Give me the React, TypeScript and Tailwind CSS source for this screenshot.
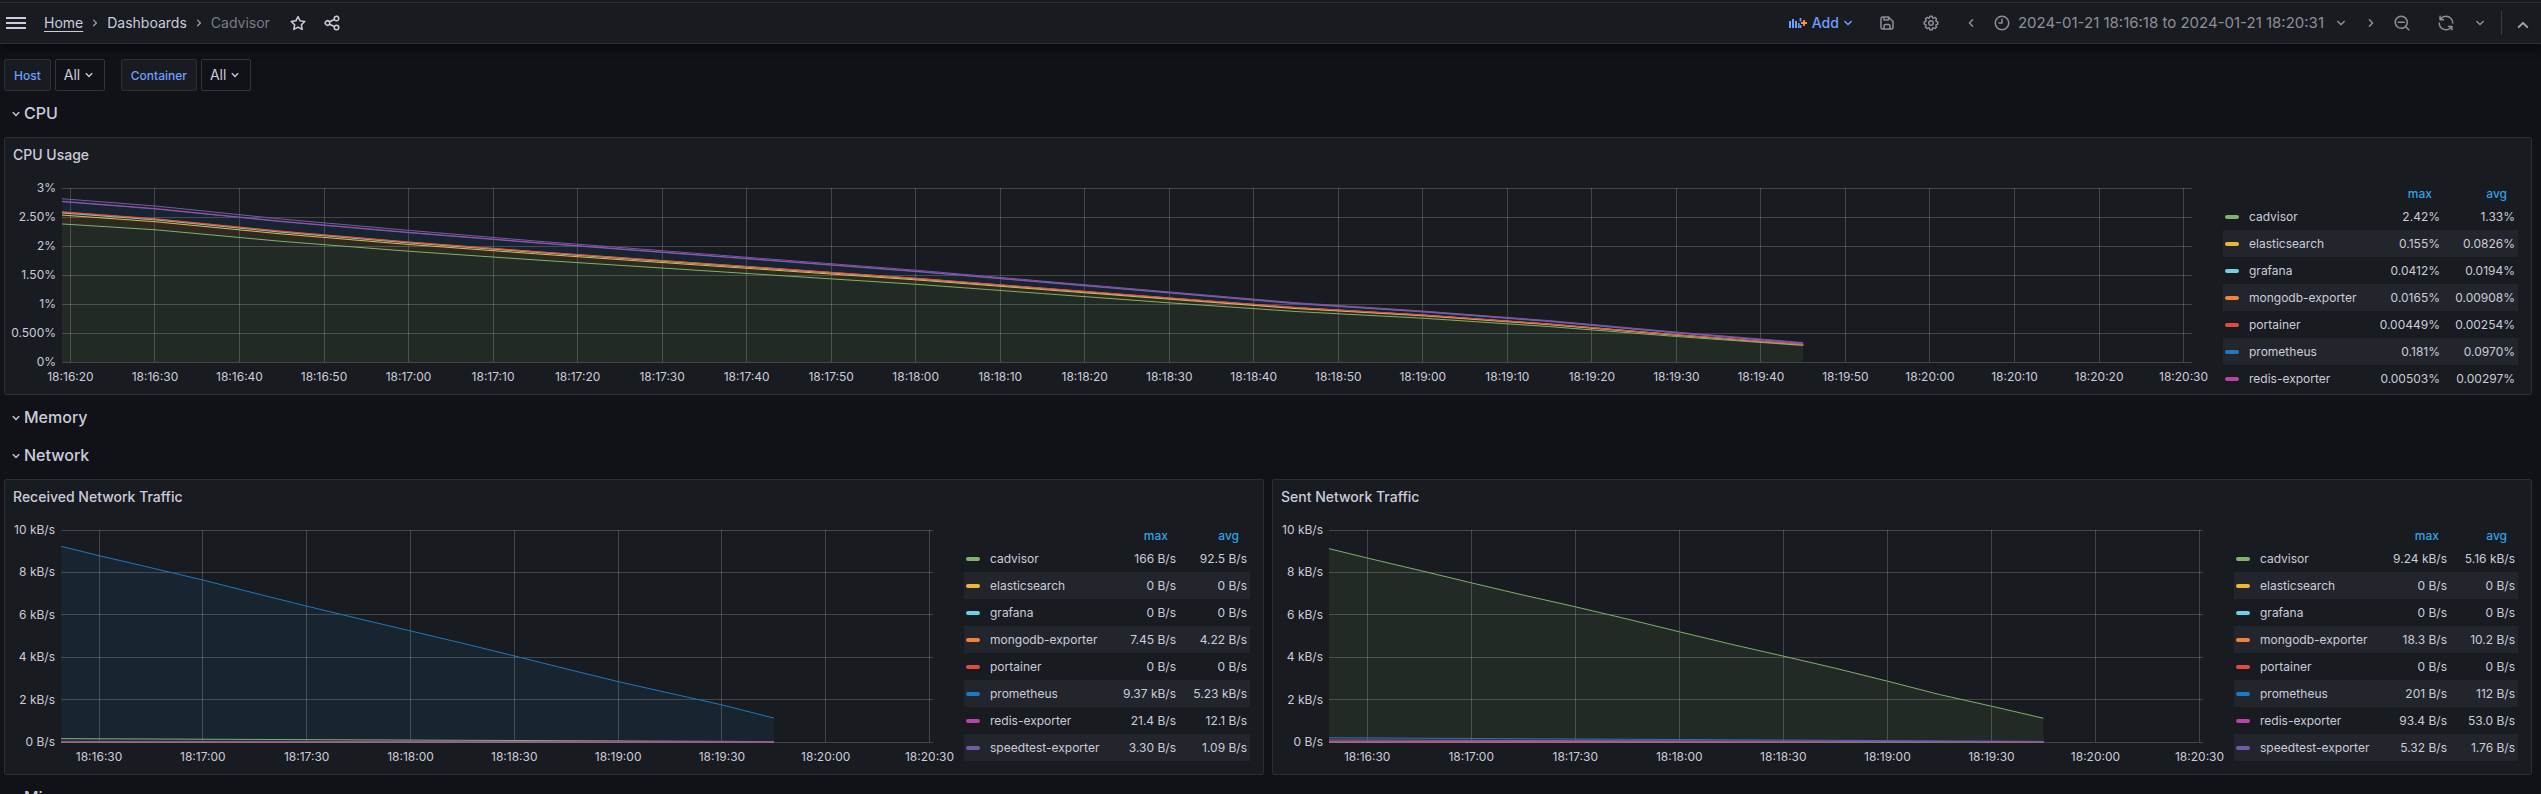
import type { ReactNode } from "react";

const PATHS = {
  angleDown:
    "M17,9.17a1,1,0,0,0-1.41,0L12,12.71,8.46,9.17a1,1,0,0,0-1.41,0,1,1,0,0,0,0,1.42l4.24,4.24a1,1,0,0,0,1.42,0L17,10.59A1,1,0,0,0,17,9.17Z",
  star: "M22,9.67A1,1,0,0,0,21.14,9l-5.69-.83L12.9,3a1,1,0,0,0-1.8,0L8.55,8.16,2.86,9a1,1,0,0,0-.81.68,1,1,0,0,0,.25,1l4.13,4-1,5.68A1,1,0,0,0,6.9,21.44L12,18.77l5.1,2.67a.93.93,0,0,0,.46.12,1,1,0,0,0,.59-.19,1,1,0,0,0,.4-1l-1-5.68,4.13-4A1,1,0,0,0,22,9.67Zm-6.15,4a1,1,0,0,0-.29.88l.72,4.2-3.76-2a1.06,1.06,0,0,0-.94,0l-3.76,2,.72-4.2a1,1,0,0,0-.29-.88l-3-3,4.21-.61a1,1,0,0,0,.76-.55L12,5.7l1.88,3.82a1,1,0,0,0,.76.55l4.21.61Z",
  share:
    "M18,14a4,4,0,0,0-3.08,1.48l-5.1-2.35a3.64,3.64,0,0,0,0-2.26l5.1-2.35A4,4,0,1,0,14,6a4.17,4.17,0,0,0,.07.71L8.79,9.14a4,4,0,1,0,0,5.72l5.28,2.43A4.17,4.17,0,0,0,14,18a4,4,0,1,0,4-4ZM18,4a2,2,0,1,1-2,2A2,2,0,0,1,18,4ZM6,14a2,2,0,1,1,2-2A2,2,0,0,1,6,14Zm12,6a2,2,0,1,1,2-2A2,2,0,0,1,18,20Z",
  save: "M20.71,9.29l-6-6a1,1,0,0,0-.32-.21A1.09,1.09,0,0,0,14,3H6A3,3,0,0,0,3,6V18a3,3,0,0,0,3,3H18a3,3,0,0,0,3-3V10A1,1,0,0,0,20.71,9.29ZM9,5h4V7H9Zm6,14H9V16a1,1,0,0,1,1-1h4a1,1,0,0,1,1,1Zm4-1a1,1,0,0,1-1,1H17V16a3,3,0,0,0-3-3H10a3,3,0,0,0-3,3v3H6a1,1,0,0,1-1-1V6A1,1,0,0,1,6,5H7V8A1,1,0,0,0,8,9h6a1,1,0,0,0,1-1V6.41l4,4Z",
  cog: "M21.32,9.55l-1.89-.63.89-1.78A1,1,0,0,0,20.13,6L18,3.87a1,1,0,0,0-1.15-.19l-1.78.89-.63-1.89A1,1,0,0,0,13.5,2h-3a1,1,0,0,0-.95.68L8.92,4.57,7.14,3.68A1,1,0,0,0,6,3.87L3.87,6a1,1,0,0,0-.19,1.15l.89,1.78-1.89.63A1,1,0,0,0,2,10.5v3a1,1,0,0,0,.68.95l1.89.63-.89,1.78A1,1,0,0,0,3.87,18L6,20.13a1,1,0,0,0,1.15.19l1.78-.89.63,1.89a1,1,0,0,0,.95.68h3a1,1,0,0,0,.95-.68l.63-1.89,1.78.89A1,1,0,0,0,18,20.13L20.13,18a1,1,0,0,0,.19-1.15l-.89-1.78,1.89-.63A1,1,0,0,0,22,13.5v-3A1,1,0,0,0,21.32,9.55ZM20,12.78l-1.2.4A2,2,0,0,0,17.64,16l.57,1.14-1.1,1.1L16,17.64a2,2,0,0,0-2.79,1.16l-.4,1.2H11.22l-.4-1.2A2,2,0,0,0,8,17.64l-1.14.57-1.1-1.1L6.36,16A2,2,0,0,0,5.2,13.18L4,12.78V11.22l1.2-.4A2,2,0,0,0,6.36,8L5.79,6.89l1.1-1.1L8,6.36A2,2,0,0,0,10.82,5.2l.4-1.2h1.56l.4,1.2A2,2,0,0,0,16,6.36l1.14-.57,1.1,1.1L17.64,8a2,2,0,0,0,1.16,2.79l1.2.4ZM12,8a4,4,0,1,0,4,4A4,4,0,0,0,12,8Zm0,6a2,2,0,1,1,2-2A2,2,0,0,1,12,14Z",
  clock:
    "M12,2A10,10,0,1,0,22,12,10,10,0,0,0,12,2Zm0,18a8,8,0,1,1,8-8A8,8,0,0,1,12,20ZM12,6a1,1,0,0,0-1,1v4H8a1,1,0,0,0,0,2h4a1,1,0,0,0,1-1V7A1,1,0,0,0,12,6Z",
  zoomOut:
    "M21.71,20.29,18,16.61A9,9,0,1,0,16.61,18l3.68,3.68a1,1,0,0,0,1.42,0A1,1,0,0,0,21.71,20.29ZM11,18a7,7,0,1,1,7-7A7,7,0,0,1,11,18Zm4-8H7a1,1,0,0,0,0,2h8a1,1,0,0,0,0-2Z",
  sync: "M19.91,15.51H15.38a1,1,0,0,0,0,2h2.4A8,8,0,0,1,4,12a1,1,0,0,0-2,0,10,10,0,0,0,16.88,7.23V21a1,1,0,0,0,2,0V16.5A1,1,0,0,0,19.91,15.51ZM12,2A10,10,0,0,0,5.12,4.77V3a1,1,0,0,0-2,0V7.5a1,1,0,0,0,1,1h4.5a1,1,0,0,0,0-2H6.22A8,8,0,0,1,20,12a1,1,0,0,0,2,0A10,10,0,0,0,12,2Z",
};

function Icon({ name, className = "size-[18px]" }: { name: keyof typeof PATHS; className?: string }) {
  return (
    <svg viewBox="0 0 24 24" fill="currentColor" aria-hidden="true" className={`shrink-0 ${className}`}>
      <path d={PATHS[name]} />
    </svg>
  );
}

function AddPanelIcon() {
  return (
    <svg viewBox="0 0 18 12" aria-hidden="true" className="h-3 w-[18px] shrink-0">
      <g fill="#6e9fff">
        <rect x="0" y="4" width="2" height="7" />
        <rect x="3" y="2" width="2" height="9" />
        <rect x="6" y="4" width="2" height="7" />
        <rect x="9" y="6" width="1.6" height="5" />
        <rect x="10.6" y="1" width="1.8" height="3.4" />
        <rect x="10.6" y="8" width="1.8" height="3" />
      </g>
      <path d="M12 6h6M15 3v6" stroke="#ff9830" strokeWidth="1.8" />
    </svg>
  );
}

function IconButton({ label, className, children }: { label: string; className: string; children: ReactNode }) {
  return (
    <button type="button" aria-label={label} className={`flex h-8 items-center justify-center ${className}`}>
      {children}
    </button>
  );
}

function TopBar() {
  return (
    <header className="relative z-10 bg-[#181b1f] pt-[2px] shadow-[0_4px_8px_rgba(0,0,0,0.6)]">
      <div className="flex h-[42px] items-center justify-between border-y border-[#2d2f36] pl-[6px] text-sm">
        <nav aria-label="Breadcrumb" className="flex items-center">
          <button type="button" aria-label="Menu" className="mr-[18px] flex w-5 flex-col gap-[3px]">
            <span className="h-[2px] bg-[#ccccdc]" />
            <span className="h-[2px] bg-[#ccccdc]" />
            <span className="h-[2px] bg-[#ccccdc]" />
          </button>
          <a href="#home" className="underline underline-offset-[3px]">
            Home
          </a>
          <Icon name="angleDown" className="mx-1 size-4 -rotate-90 text-[#9a9ba6]" />
          <a href="#dashboards">Dashboards</a>
          <Icon name="angleDown" className="mx-1 size-4 -rotate-90 text-[#9a9ba6]" />
          <span className="text-[#7b7c87]">Cadvisor</span>
          <IconButton label="Mark as favorite" className="ml-[19px] w-[18px]">
            <Icon name="star" />
          </IconButton>
          <IconButton label="Share dashboard" className="ml-4 w-[18px]">
            <Icon name="share" />
          </IconButton>
        </nav>
        <div className="flex items-center text-[#8e8f9a]">
          <button type="button" className="mr-[21px] flex h-8 items-center font-medium text-[#6e9fff]">
            <AddPanelIcon />
            <span className="ml-[5px]">Add</span>
            <Icon name="angleDown" />
          </button>
          <IconButton label="Save dashboard" className="w-[18px]">
            <Icon name="save" />
          </IconButton>
          <IconButton label="Dashboard settings" className="ml-[26px] w-[18px]">
            <Icon name="cog" />
          </IconButton>
          <IconButton label="Move time range back" className="ml-[22px] w-[18px]">
            <Icon name="angleDown" className="size-[18px] rotate-90" />
          </IconButton>
          <button type="button" className="ml-[13px] flex h-8 items-center">
            <Icon name="clock" />
            <span className="mr-2 ml-[7px] text-[15px]">2024-01-21 18:16:18 to 2024-01-21 18:20:31</span>
            <Icon name="angleDown" />
          </button>
          <IconButton label="Move time range forward" className="ml-3 w-[18px]">
            <Icon name="angleDown" className="size-[18px] -rotate-90" />
          </IconButton>
          <IconButton label="Zoom out" className="ml-[13px] w-[18px]">
            <Icon name="zoomOut" />
          </IconButton>
          <IconButton label="Refresh dashboard" className="ml-[26px] w-[18px]">
            <Icon name="sync" />
          </IconButton>
          <IconButton label="Refresh interval" className="ml-4 w-[18px]">
            <Icon name="angleDown" />
          </IconButton>
          <span className="ml-3 h-6 w-px bg-[#3a3c43]" />
          <IconButton label="Hide toolbar" className="mr-[6px] ml-[9px] w-6 pt-1 text-[#a2a3ae]">
            <Icon name="angleDown" className="size-6 rotate-180" />
          </IconButton>
        </div>
      </div>
    </header>
  );
}

function Variable({ id, label }: { id: string; label: string }) {
  return (
    <div className="flex gap-1">
      <label
        htmlFor={id}
        className="flex h-8 items-center rounded-[2px] border border-[#2d2f36] bg-[#181b1f] px-[9px] pt-px text-xs font-medium text-[#6e9fff]"
      >
        {label}
      </label>
      <div className="relative">
        <select
          id={id}
          className="h-8 w-[50px] appearance-none rounded-[2px] border border-[#33353c] bg-[#111217] pl-2 text-sm"
        >
          <option>All</option>
        </select>
        <Icon name="angleDown" className="pointer-events-none absolute top-2 right-2 size-4" />
      </div>
    </div>
  );
}

function SectionRow({ title }: { title: string }) {
  return (
    <button type="button" className="flex h-[30px] items-center pb-[2px] pl-1 text-base font-medium">
      <Icon name="angleDown" className="mt-[2px] size-4" />
      <h2>{title}</h2>
    </button>
  );
}

const COLORS = {
  cadvisor: "#7eb26d",
  elasticsearch: "#eab839",
  grafana: "#6ed0e0",
  "mongodb-exporter": "#ef843c",
  portainer: "#e24d42",
  prometheus: "#1f78c1",
  "redis-exporter": "#ba43a9",
  "speedtest-exporter": "#705da0",
};
type SeriesName = keyof typeof COLORS;

/* Seconds since 18:16:19, the left edge of every plot. */
const RANGE = 252;
const TIMES = [0, 11, 26, 41, 56, 71, 86, 101, 116, 131, 146, 161, 176, 191, 206];

interface Series {
  name: SeriesName;
  values: number[];
  base?: number[];
}

interface Tick {
  at: number;
  label: string;
}

function timeTicks(step: number): Tick[] {
  const ticks: Tick[] = [];
  const start = 16 * 60 + 19;
  for (let s = Math.ceil(start / step) * step; s <= start + RANGE; s += step) {
    const mm = String(Math.floor(s / 60)).padStart(2, "0");
    const ss = String(s % 60).padStart(2, "0");
    ticks.push({ at: s - start, label: `18:${mm}:${ss}` });
  }
  return ticks;
}

function Chart({
  series,
  max,
  yLabels,
  step,
  axis,
}: {
  series: Series[];
  max: number;
  yLabels: string[];
  step: number;
  axis: string;
}) {
  const ticks = timeTicks(step);
  const y = (v: number) => (1 - v / max) * 100;
  return (
    <div className="flex min-w-0 flex-1 pt-[18px] pb-8">
      <div className={`-my-2 flex flex-col justify-between pr-[6px] text-right text-xs leading-4 ${axis}`}>
        {yLabels.map((l) => (
          <span key={l}>{l}</span>
        ))}
      </div>
      <div className="flex min-w-0 flex-1 flex-col">
        <svg className="h-0 w-full flex-1 overflow-visible" role="img" aria-label="Time series">
          <svg viewBox={`0 0 ${RANGE} 100`} preserveAspectRatio="none" width="100%" height="100%" overflow="visible">
            {series.map(({ name, values, base }) => {
              const top = TIMES.map((t, i) => `${t},${y(values[i])}`);
              const bottom = TIMES.map((t, i) => `${t},${y(base ? base[i] : 0)}`).reverse();
              return (
                <polygon key={name} points={[...top, ...bottom].join(" ")} fill={COLORS[name]} fillOpacity="0.1" />
              );
            })}
          </svg>
          <g stroke="#ffffff" strokeOpacity="0.19" shapeRendering="crispEdges">
            {yLabels.map((l, i) => {
              const at = `${(i / (yLabels.length - 1)) * 100}%`;
              return <line key={l} x1="0" x2="100%" y1={at} y2={at} />;
            })}
            {ticks.map((t) => {
              const at = `${(t.at / RANGE) * 100}%`;
              return <line key={t.label} x1={at} x2={at} y1="0" y2="100%" />;
            })}
          </g>
          <svg viewBox={`0 0 ${RANGE} 100`} preserveAspectRatio="none" width="100%" height="100%" overflow="visible">
            {series.map(({ name, values }) => (
              <polyline
                key={name}
                points={TIMES.map((t, i) => `${t},${y(values[i])}`).join(" ")}
                fill="none"
                stroke={COLORS[name]}
                strokeWidth="1"
                vectorEffect="non-scaling-stroke"
              />
            ))}
          </svg>
          {ticks.map((t) => (
            <text
              key={t.label}
              x={`${(t.at / RANGE) * 100}%`}
              y="100%"
              dy="19"
              textAnchor="middle"
              fill="#ccccdc"
              className="text-xs"
            >
              {t.label}
            </text>
          ))}
        </svg>
      </div>
    </div>
  );
}

type LegendRow = [SeriesName, string, string];

function Legend({ rows, width, column }: { rows: LegendRow[]; width: string; column: string }) {
  return (
    <table className={`mt-[14px] mr-[13px] ml-[31px] table-fixed self-start text-xs ${width}`}>
      <thead>
        <tr className="h-5 text-[#33a2e5]">
          <th aria-label="Series" />
          <th className={`p-0 pr-[11px] text-right font-medium ${column}`}>max</th>
          <th className={`p-0 pr-[11px] text-right font-medium ${column}`}>avg</th>
        </tr>
      </thead>
      <tbody>
        {rows.map(([name, maxValue, avg]) => (
          <tr key={name} className="h-[27px] first:h-[26px] even:bg-[#22252b]">
            <td className="p-0 pl-[2px] whitespace-nowrap">
              <span className="flex items-center gap-[10px]">
                <span className="h-1 w-[14px] rounded-full" style={{ backgroundColor: COLORS[name] }} />
                {name}
              </span>
            </td>
            <td className="p-0 pr-[3px] text-right whitespace-nowrap">{maxValue}</td>
            <td className="p-0 pr-[3px] text-right whitespace-nowrap">{avg}</td>
          </tr>
        ))}
      </tbody>
    </table>
  );
}

function Panel({ title, height, children }: { title: string; height: string; children: ReactNode }) {
  return (
    <section
      className={`flex min-w-0 flex-1 flex-col rounded-[2px] border border-[#2d2f36] bg-[#181b1f] ${height}`}
    >
      <h3 className="flex h-8 items-center px-2 pt-[2px] text-sm font-medium">{title}</h3>
      <div className="flex min-h-0 flex-1">{children}</div>
    </section>
  );
}

/* CPU usage is stacked: each layer sits on the one before it. */
const cpu = [2.38, 2.28, 2.08, 1.91, 1.76, 1.62, 1.48, 1.34, 1.18, 1.02, 0.87, 0.755, 0.61, 0.44, 0.285];
const toPortainer = [0.21, 0.19, 0.175, 0.16, 0.145, 0.13, 0.118, 0.105, 0.095, 0.086, 0.07, 0.057, 0.045, 0.03, 0.018];
const toRedis = [0.18, 0.175, 0.17, 0.165, 0.155, 0.145, 0.132, 0.12, 0.105, 0.09, 0.07, 0.057, 0.048, 0.036, 0.022];
const toSpeedtest = [0.045, 0.045, 0.04, 0.035, 0.027, 0.024, 0.02, 0.018, 0.015, 0.013, 0.012, 0.01, 0.01, 0.01, 0.01];

const portainerTop = cpu.map((v, i) => v + toPortainer[i]);
const share = (f: number) => cpu.map((v, i) => v + toPortainer[i] * f);
const redisTop = portainerTop.map((v, i) => v + toRedis[i]);
const prometheusTop = redisTop.map((v) => v - 0.006);
const speedtestTop = redisTop.map((v, i) => v + toSpeedtest[i]);

const cpuSeries: Series[] = [
  { name: "cadvisor", values: cpu },
  { name: "elasticsearch", values: share(0.73), base: cpu },
  { name: "grafana", values: share(0.9), base: share(0.73) },
  { name: "mongodb-exporter", values: share(0.97), base: share(0.9) },
  { name: "portainer", values: portainerTop, base: share(0.97) },
  { name: "prometheus", values: prometheusTop, base: portainerTop },
  { name: "redis-exporter", values: redisTop, base: prometheusTop },
  { name: "speedtest-exporter", values: speedtestTop, base: redisTop },
];

const ramp = (from: number, to: number) => TIMES.map((t) => from + ((to - from) * t) / 206);
const zero = ramp(0, 0);

const receivedSeries: Series[] = [
  { name: "cadvisor", values: ramp(0.16, 0.02) },
  { name: "elasticsearch", values: zero },
  { name: "grafana", values: zero },
  { name: "mongodb-exporter", values: ramp(0.007, 0) },
  { name: "portainer", values: zero },
  {
    name: "prometheus",
    values: [9.23, 8.79, 8.22, 7.64, 7.02, 6.41, 5.82, 5.24, 4.66, 4.06, 3.45, 2.85, 2.3, 1.75, 1.13],
  },
  { name: "redis-exporter", values: ramp(0.021, 0.002) },
  { name: "speedtest-exporter", values: ramp(0.003, 0) },
];

const sentSeries: Series[] = [
  {
    name: "cadvisor",
    values: [9.12, 8.68, 8.1, 7.51, 6.93, 6.38, 5.8, 5.2, 4.61, 4.05, 3.48, 2.87, 2.24, 1.69, 1.12],
  },
  { name: "elasticsearch", values: zero },
  { name: "grafana", values: zero },
  { name: "mongodb-exporter", values: ramp(0.018, 0.002) },
  { name: "portainer", values: zero },
  { name: "prometheus", values: ramp(0.2, 0.03) },
  { name: "redis-exporter", values: ramp(0.093, 0.01) },
  { name: "speedtest-exporter", values: ramp(0.005, 0) },
];

const cpuLegend: LegendRow[] = [
  ["cadvisor", "2.42%", "1.33%"],
  ["elasticsearch", "0.155%", "0.0826%"],
  ["grafana", "0.0412%", "0.0194%"],
  ["mongodb-exporter", "0.0165%", "0.00908%"],
  ["portainer", "0.00449%", "0.00254%"],
  ["prometheus", "0.181%", "0.0970%"],
  ["redis-exporter", "0.00503%", "0.00297%"],
];

const receivedLegend: LegendRow[] = [
  ["cadvisor", "166 B/s", "92.5 B/s"],
  ["elasticsearch", "0 B/s", "0 B/s"],
  ["grafana", "0 B/s", "0 B/s"],
  ["mongodb-exporter", "7.45 B/s", "4.22 B/s"],
  ["portainer", "0 B/s", "0 B/s"],
  ["prometheus", "9.37 kB/s", "5.23 kB/s"],
  ["redis-exporter", "21.4 B/s", "12.1 B/s"],
  ["speedtest-exporter", "3.30 B/s", "1.09 B/s"],
];

const sentLegend: LegendRow[] = [
  ["cadvisor", "9.24 kB/s", "5.16 kB/s"],
  ["elasticsearch", "0 B/s", "0 B/s"],
  ["grafana", "0 B/s", "0 B/s"],
  ["mongodb-exporter", "18.3 B/s", "10.2 B/s"],
  ["portainer", "0 B/s", "0 B/s"],
  ["prometheus", "201 B/s", "112 B/s"],
  ["redis-exporter", "93.4 B/s", "53.0 B/s"],
  ["speedtest-exporter", "5.32 B/s", "1.76 B/s"],
];

const percentLabels = ["3%", "2.50%", "2%", "1.50%", "1%", "0.500%", "0%"];
const rateLabels = ["10 kB/s", "8 kB/s", "6 kB/s", "4 kB/s", "2 kB/s", "0 B/s"];

export default function App() {
  return (
    <div className="flex h-screen flex-col overflow-hidden bg-[#111217] font-['Inter','Liberation_Sans',sans-serif] text-[#ccccdc]">
      <TopBar />
      <main className="flex flex-col gap-2 pt-[15px] pr-[9px] pl-1">
        <div className="flex gap-4">
          <Variable id="var-host" label="Host" />
          <Variable id="var-container" label="Container" />
        </div>
        <SectionRow title="CPU" />
        <div className="flex">
          <Panel title="CPU Usage" height="h-[258px]">
            <Chart series={cpuSeries} max={3} yLabels={percentLabels} step={10} axis="w-[57px]" />
            <Legend rows={cpuLegend} width="w-[295px]" column="w-[75px]" />
          </Panel>
        </div>
        <SectionRow title="Memory" />
        <SectionRow title="Network" />
        <div className="flex gap-2">
          <Panel title="Received Network Traffic" height="h-[296px]">
            <Chart series={receivedSeries} max={10} yLabels={rateLabels} step={30} axis="w-[56px]" />
            <Legend rows={receivedLegend} width="w-[286px]" column="w-[71px]" />
          </Panel>
          <Panel title="Sent Network Traffic" height="h-[296px]">
            <Chart series={sentSeries} max={10} yLabels={rateLabels} step={30} axis="w-[56px]" />
            <Legend rows={sentLegend} width="w-[284px]" column="w-[68px]" />
          </Panel>
        </div>
        <SectionRow title="Misc" />
      </main>
    </div>
  );
}
